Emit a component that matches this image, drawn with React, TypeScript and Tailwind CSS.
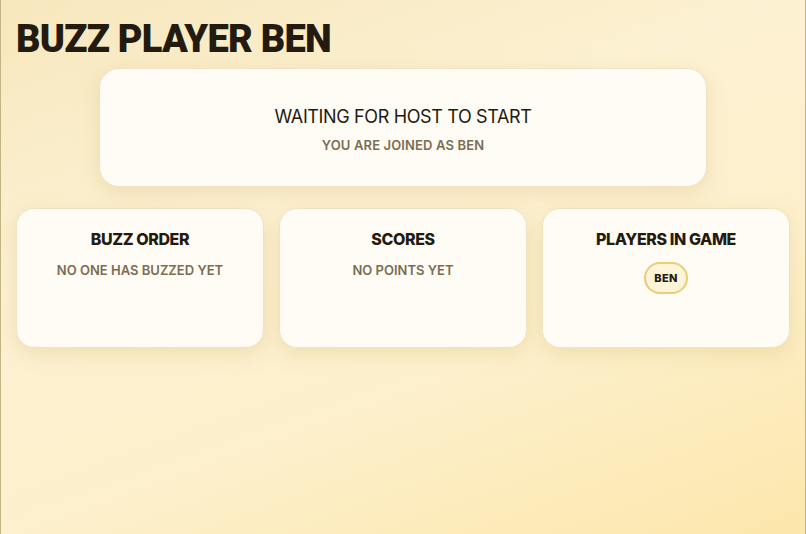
export default function App() {
  const cards = [
    { title: "BUZZ ORDER", body: "NO ONE HAS BUZZED YET" },
    { title: "SCORES", body: "NO POINTS YET" },
  ]

  return (
    <div
      className="min-h-[534px] w-full border-x border-[#c4b384] bg-[linear-gradient(160deg,#f7e7bd_0%,#fcf1d2_35%,#fdf0cc_65%,#fce6ab_100%)] px-[15px] pt-[17px] pb-4 text-[#231b10]"
      style={{ fontFamily: "Inter, 'Noto Sans', sans-serif" }}
    >
      <h1
        className="text-[38px] leading-[44px] font-black tracking-[-0.02em]"
        style={{ fontFamily: "Roboto, Inter, sans-serif" }}
      >
        BUZZ PLAYER BEN
      </h1>

      <div className="mx-auto mt-[7px] flex h-[119px] w-[608px] flex-col items-center justify-center rounded-[20px] border border-[#efe3c4] bg-[#fffcf5] pt-[3px] shadow-[0_6px_20px_rgba(200,170,90,0.25)]">
        <div className="text-[18px] leading-7 tracking-[-0.02em] text-[#231b10]">WAITING FOR HOST TO START</div>
        <div className="mt-[4px] text-[13px] leading-5 font-semibold tracking-[0.01em] text-[#7b6d52]">
          YOU ARE JOINED AS BEN
        </div>
      </div>

      <div className="mt-[21px] grid grid-cols-3 gap-[15px]">
        {cards.map((c) => (
          <div
            key={c.title}
            className="flex h-[140px] flex-col items-center rounded-[18px] border border-[#efe3c4] bg-[#fffcf5] pt-[18px] shadow-[0_6px_20px_rgba(200,170,90,0.25)]"
          >
            <div className="text-[16px] leading-6 font-extrabold tracking-[-0.025em]">{c.title}</div>
            <div className="mt-[9px] text-[13px] leading-5 font-semibold text-[#7b6d52]">{c.body}</div>
          </div>
        ))}
        <div className="flex h-[140px] flex-col items-center rounded-[18px] border border-[#efe3c4] bg-[#fffcf5] pt-[18px] shadow-[0_6px_20px_rgba(200,170,90,0.25)]">
          <div className="text-[16px] leading-6 font-extrabold tracking-[-0.025em]">PLAYERS IN GAME</div>
          <div className="mt-[11px] flex h-[32px] w-[44px] items-center justify-center rounded-full border-2 border-[#ebcd74] bg-[#fdf4da] text-[11px] font-extrabold tracking-[0.03em]">
            BEN
          </div>
        </div>
      </div>
    </div>
  )
}
